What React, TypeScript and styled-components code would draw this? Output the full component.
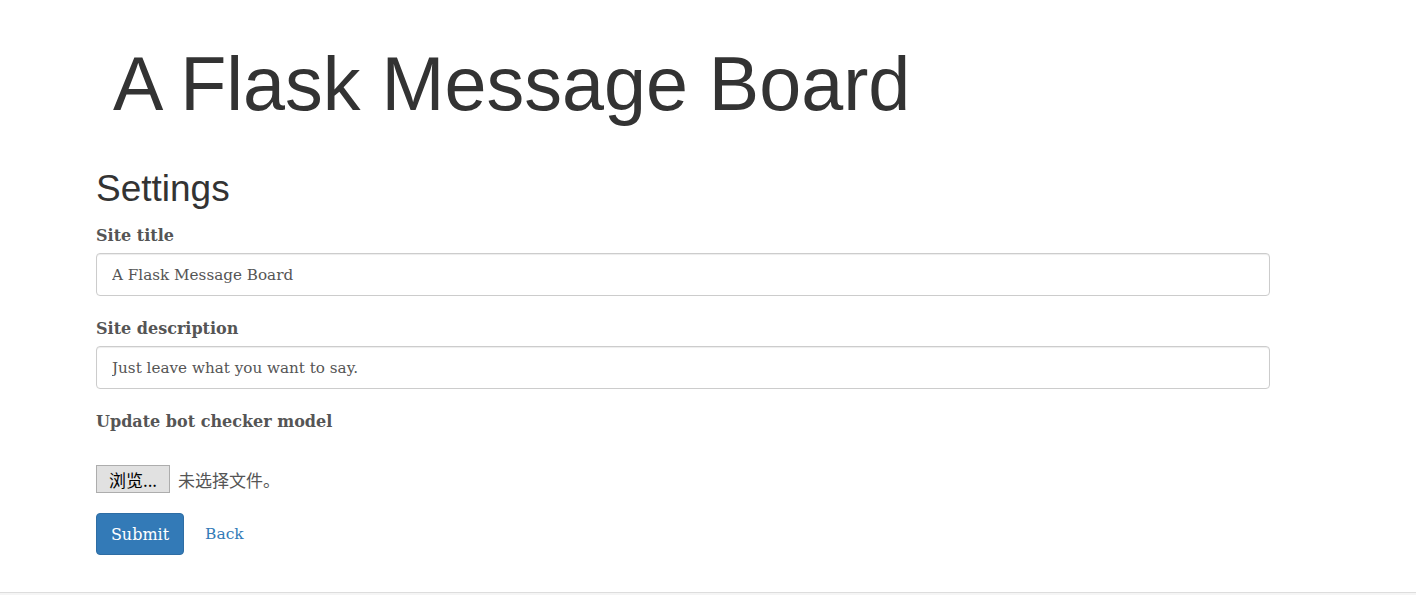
import React from "react";
import styled, { createGlobalStyle } from "styled-components";

const GlobalStyle = createGlobalStyle`
  html, body {
    margin: 0;
    padding: 0;
    background: #ffffff;
  }
  body {
    font-family: "DejaVu Serif", "Liberation Serif", serif;
    color: #333333;
  }
`;

const Page = styled.div`
  width: 1416px;
  height: 595px;
  display: flex;
  flex-direction: column;
  overflow: hidden;
`;

const Container = styled.div`
  flex: 1;
  padding: 0 0 0 96px;
  width: 1174px;
`;

const Banner = styled.h1`
  margin: 34px 0 0 17px;
  font-family: "Liberation Sans", Arial, sans-serif;
  font-weight: 400;
  font-size: 75.5px;
  line-height: 100px;
  color: #333333;
`;

const SectionTitle = styled.h2`
  margin: 33px 0 0 0;
  font-family: "Liberation Sans", Arial, sans-serif;
  font-weight: 400;
  font-size: 37px;
  line-height: 44px;
  color: #333333;
`;

const Form = styled.form`
  display: flex;
  flex-direction: column;
`;

const Field = styled.div<{ $top: number }>`
  display: flex;
  flex-direction: column;
  margin-top: ${(p) => p.$top}px;
`;

const Label = styled.label`
  font-weight: 700;
  font-size: 16px;
  line-height: 22px;
  color: #555555;
`;

const TextInput = styled.input`
  margin-top: 6px;
  box-sizing: border-box;
  width: 1174px;
  height: 43px;
  padding: 0 15px;
  border: 1px solid #cccccc;
  border-radius: 4px;
  font-family: "DejaVu Serif", "Liberation Serif", serif;
  font-size: 15.2px;
  color: #555555;
  box-shadow: inset 0 1px 1px rgba(0, 0, 0, 0.075);
  outline: none;
`;

const FileRow = styled.div`
  display: flex;
  align-items: center;
  gap: 8px;
  margin-top: 32px;
`;

const FileButton = styled.button`
  box-sizing: border-box;
  width: 74px;
  height: 28px;
  padding: 0;
  border: 1px solid #adadad;
  background: #e1e1e1;
  font-family: "Noto Sans CJK SC", "Liberation Sans", sans-serif;
  font-size: 17px;
  color: #000000;
`;

const FileName = styled.span`
  font-family: "Noto Sans CJK SC", sans-serif;
  font-size: 17px;
  color: #555555;
`;

const Actions = styled.div`
  display: flex;
  align-items: center;
  gap: 21px;
  margin-top: 20px;
`;

const SubmitButton = styled.button`
  box-sizing: border-box;
  width: 88px;
  height: 42px;
  border: 1px solid #2e6da4;
  border-radius: 4px;
  background: #337ab7;
  color: #ffffff;
  font-family: "DejaVu Serif", "Liberation Serif", serif;
  font-size: 16px;
`;

const BackLink = styled.a`
  color: #337ab7;
  font-size: 15.5px;
  text-decoration: none;
`;

const Footer = styled.footer`
  height: 2px;
  border-top: 1px solid #dddddd;
  background: #f5f5f5;
`;

export default function App() {
  return (
    <Page>
      <GlobalStyle />
      <Container>
        <Banner>A Flask Message Board</Banner>
        <SectionTitle>Settings</SectionTitle>
        <Form onSubmit={(e) => e.preventDefault()}>
          <Field $top={14}>
            <Label>Site title</Label>
            <TextInput defaultValue="A Flask Message Board" />
          </Field>
          <Field $top={22}>
            <Label>Site description</Label>
            <TextInput defaultValue="Just leave what you want to say." />
          </Field>
          <Field $top={22}>
            <Label>Update bot checker model</Label>
          </Field>
          <FileRow>
            <FileButton type="button">浏览...</FileButton>
            <FileName>未选择文件。</FileName>
          </FileRow>
          <Actions>
            <SubmitButton type="submit">Submit</SubmitButton>
            <BackLink href="#">Back</BackLink>
          </Actions>
        </Form>
      </Container>
      <Footer />
    </Page>
  );
}
